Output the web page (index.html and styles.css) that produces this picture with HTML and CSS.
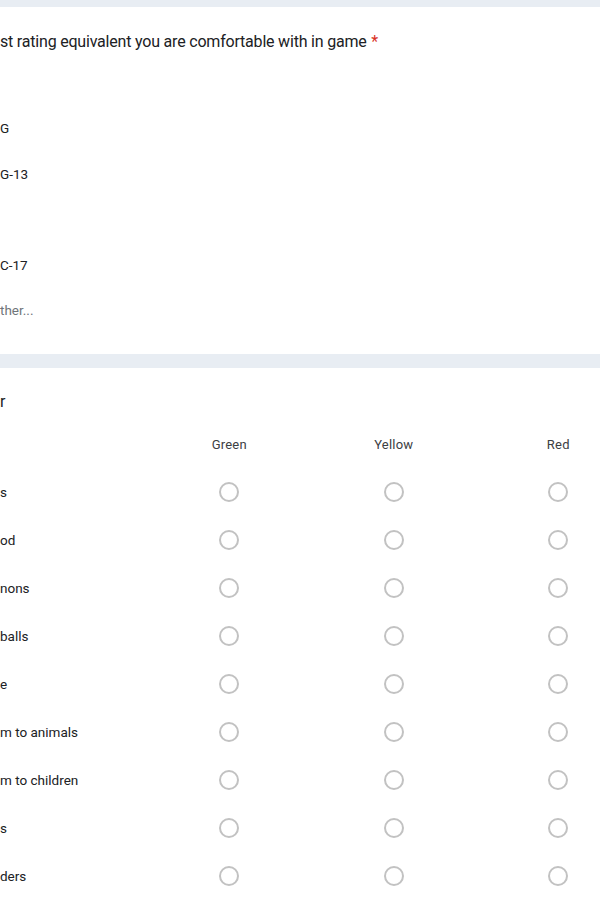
FILE: index.html
```html
<!DOCTYPE html>
<html>
<head>
<meta charset="utf-8">
<link rel="stylesheet" href="styles.css">
</head>
<body>
<div class="page">
  <section class="card card-first">
    <div class="q-title">st rating equivalent you are comfortable with in game <span class="req">*</span></div>
    <div class="options">
      <div class="opt">G</div>
      <div class="opt">G-13</div>
      <div class="opt"></div>
      <div class="opt">C-17</div>
      <div class="opt opt-other">ther...</div>
    </div>
  </section>
  <section class="card card-second">
    <div class="q-title">r</div>
    <div class="grid">
      <div class="row head">
        <div class="lbl"></div>
        <div class="col">Green</div>
        <div class="col">Yellow</div>
        <div class="col">Red</div>
      </div>
      <div class="row"><div class="lbl">s</div><div class="col"><span class="radio"></span></div><div class="col"><span class="radio"></span></div><div class="col"><span class="radio"></span></div></div>
      <div class="row"><div class="lbl">od</div><div class="col"><span class="radio"></span></div><div class="col"><span class="radio"></span></div><div class="col"><span class="radio"></span></div></div>
      <div class="row"><div class="lbl">nons</div><div class="col"><span class="radio"></span></div><div class="col"><span class="radio"></span></div><div class="col"><span class="radio"></span></div></div>
      <div class="row"><div class="lbl">balls</div><div class="col"><span class="radio"></span></div><div class="col"><span class="radio"></span></div><div class="col"><span class="radio"></span></div></div>
      <div class="row"><div class="lbl">e</div><div class="col"><span class="radio"></span></div><div class="col"><span class="radio"></span></div><div class="col"><span class="radio"></span></div></div>
      <div class="row"><div class="lbl">m to animals</div><div class="col"><span class="radio"></span></div><div class="col"><span class="radio"></span></div><div class="col"><span class="radio"></span></div></div>
      <div class="row"><div class="lbl">m to children</div><div class="col"><span class="radio"></span></div><div class="col"><span class="radio"></span></div><div class="col"><span class="radio"></span></div></div>
      <div class="row"><div class="lbl">s</div><div class="col"><span class="radio"></span></div><div class="col"><span class="radio"></span></div><div class="col"><span class="radio"></span></div></div>
      <div class="row"><div class="lbl">ders</div><div class="col"><span class="radio"></span></div><div class="col"><span class="radio"></span></div><div class="col"><span class="radio"></span></div></div>
    </div>
  </section>
</div>
</body>
</html>
```

FILE: styles.css
```css
html, body {
  margin: 0;
  padding: 0;
  width: 600px;
  height: 900px;
  overflow: hidden;
  background: #e8edf3;
}
.page {
  padding-top: 7px;
  display: flex;
  flex-direction: column;
  gap: 14px;
  font-family: Roboto, "Liberation Sans", sans-serif;
  color: #202124;
}
.card {
  background: #ffffff;
  width: 600px;
  overflow: hidden;
}
.card-first {
  padding: 23px 0 22px 0;
  height: 302px;
}
.card-second {
  padding-top: 22px;
  height: 510px;
}
.q-title {
  font-size: 16px;
  line-height: 24px;
  letter-spacing: -0.2px;
  color: #202124;
}
.req {
  color: #d93025;
  margin-left: 1px;
}
.options {
  margin-top: 52px;
}
.opt {
  height: 45.5px;
  line-height: 45.5px;
  font-size: 13.5px;
  color: #202124;
}
.opt-other {
  color: #70757a;
}
.grid {
  margin-top: 6px;
}
.row {
  display: grid;
  grid-template-columns: 147px repeat(3, 164.5px);
  height: 48px;
  align-items: center;
}
.lbl {
  font-size: 13.5px;
  color: #202124;
}
.col {
  display: flex;
  justify-content: center;
  align-items: center;
}
.head .col {
  font-size: 13px;
  color: #3c4043;
  letter-spacing: 0.2px;
}
.radio {
  width: 16px;
  height: 16px;
  border: 2px solid #c2c2c2;
  border-radius: 50%;
  display: block;
}
```
